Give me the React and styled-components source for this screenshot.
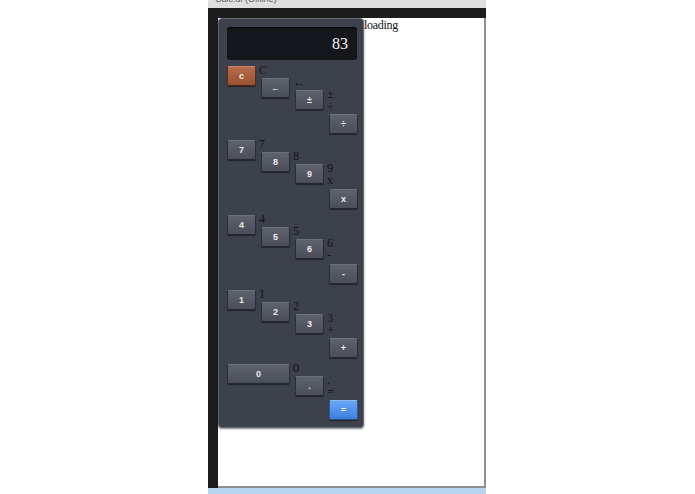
import React from "react";
import styled, { createGlobalStyle, css } from "styled-components";

const Global = createGlobalStyle`
  html, body { margin: 0; padding: 0; background: #ffffff; }
  body { font-family: "Liberation Serif", "Times New Roman", serif; font-size: 12px; }
`;

const Window = styled.div`
  margin-left: 208px;
  width: 278px;
  height: 494px;
  display: flex;
  flex-direction: column;
`;

const TitleStrip = styled.div`
  height: 8px;
  background: #dedede;
  overflow: hidden;
  padding-left: 7px;
  font-family: "Liberation Sans", Arial, sans-serif;
  font-size: 9px;
  line-height: 9px;
  color: #5a5a5a;
  & > span { display: block; margin-top: -5px; }
`;

const Frame = styled.div`
  flex: 1;
  background: #1d1d1d;
  padding: 10px 0 0 10px;
  display: flex;
  min-height: 0;
`;

const Content = styled.div`
  flex: 1;
  background: #ffffff;
  border-right: 2px solid #8f8f8f;
  border-bottom: 2px solid #8f8f8f;
  display: flex;
  align-items: flex-start;
`;

const BottomBar = styled.div`
  height: 6px;
  background: #b8d3ee;
`;

const Panel = styled.div`
  width: 146px;
  box-sizing: border-box;
  background: #3d414c;
  border: 1px solid #676b76;
  border-radius: 4px;
  padding: 8px 6px 7px 8px;
  box-shadow: 0 1px 2px rgba(0, 0, 0, 0.5);
`;

const Display = styled.div`
  height: 33px;
  background: #16171c;
  border-radius: 3px;
  color: #f4f4f4;
  font-family: "Liberation Serif", "Times New Roman", serif;
  font-size: 16px;
  display: flex;
  align-items: center;
  justify-content: flex-end;
  padding-right: 9px;
  box-shadow: inset 0 1px 2px rgba(0, 0, 0, 0.6);
`;

const Keypad = styled.div`
  margin-top: 6px;
  display: flex;
  flex-direction: column;
  gap: 6px;
`;

const Row = styled.div`
  display: grid;
  grid-template-columns: 34px 34px 34px 28px;
  align-items: start;
`;

const Key = styled.div`
  display: flex;
  align-items: flex-start;
  margin-top: ${(p) => p.$offset}px;
  grid-column: span ${(p) => p.$span || 1};
  min-width: 0;
`;

const tones = {
  gray: css`
    background: linear-gradient(#5e626d, #4a4e59);
    border-color: #6c707b #2c2f37 #24272e #2c2f37;
  `,
  orange: css`
    background: linear-gradient(#b86d4c, #98502f);
    border-color: #c9856a #5b2e1c #4a2516 #5b2e1c;
  `,
  blue: css`
    background: linear-gradient(#68a6f6, #3f7fdd);
    border-color: #8cbcf8 #2d5a9e #244c88 #2d5a9e;
  `,
};

const Button = styled.button`
  flex-shrink: 0;
  width: ${(p) => (p.$wide ? 63 : 29)}px;
  height: 20px;
  box-sizing: border-box;
  border: 1px solid;
  border-radius: 2px;
  padding: 0;
  ${(p) => tones[p.$tone || "gray"]}
  box-shadow: 0 1px 1px rgba(0, 0, 0, 0.45);
  color: #ececec;
  font-family: "Liberation Sans", Arial, sans-serif;
  font-weight: bold;
  font-size: 9px;
  line-height: 18px;
  text-align: center;
  cursor: pointer;
`;

const Label = styled.div`
  margin-left: 3px;
  margin-top: -2px;
  font-family: "Liberation Serif", "Times New Roman", serif;
  font-size: 12px;
  line-height: 12px;
  color: #141414;
  white-space: nowrap;
`;

const Loading = styled.span`
  font-family: "Liberation Serif", "Times New Roman", serif;
  font-size: 12px;
  letter-spacing: -0.3px;
  color: #111;
`;

const rows = [
  [
    { t: "c", l: ["C"], tone: "orange", o: 0 },
    { t: "\u2190", l: ["\u2190"], o: 12 },
    { t: "\u00b1", l: ["\u00b1", "\u00f7"], o: 24 },
    { t: "\u00f7", l: [], o: 48 },
  ],
  [
    { t: "7", l: ["7"], o: 0 },
    { t: "8", l: ["8"], o: 12 },
    { t: "9", l: ["9", "x"], o: 24 },
    { t: "x", l: [], o: 49 },
  ],
  [
    { t: "4", l: ["4"], o: 0 },
    { t: "5", l: ["5"], o: 12 },
    { t: "6", l: ["6", "-"], o: 24 },
    { t: "-", l: [], o: 49 },
  ],
  [
    { t: "1", l: ["1"], o: 0 },
    { t: "2", l: ["2"], o: 12 },
    { t: "3", l: ["3", "+"], o: 24 },
    { t: "+", l: [], o: 48 },
  ],
  [
    { t: "0", l: ["0"], o: 0, wide: true, span: 2 },
    { t: ".", l: [".", "="], o: 12 },
    { t: "=", l: [], o: 36, tone: "blue" },
  ],
];

export default function App() {
  return (
    <>
      <Global />
      <Window>
        <TitleStrip>
          <span>Calc.ui (Offline)</span>
        </TitleStrip>
        <Frame>
          <Content>
            <Panel>
              <Display>83</Display>
              <Keypad>
                {rows.map((row, i) => (
                  <Row key={i}>
                    {row.map((k, j) => (
                      <Key key={j} $offset={k.o} $span={k.span}>
                        <Button $tone={k.tone} $wide={k.wide}>
                          {k.t}
                        </Button>
                        {k.l.length > 0 && (
                          <Label>
                            {k.l.map((s, n) => (
                              <div key={n}>{s}</div>
                            ))}
                          </Label>
                        )}
                      </Key>
                    ))}
                  </Row>
                ))}
              </Keypad>
            </Panel>
            <Loading>loading</Loading>
          </Content>
        </Frame>
        <BottomBar />
      </Window>
    </>
  );
}
